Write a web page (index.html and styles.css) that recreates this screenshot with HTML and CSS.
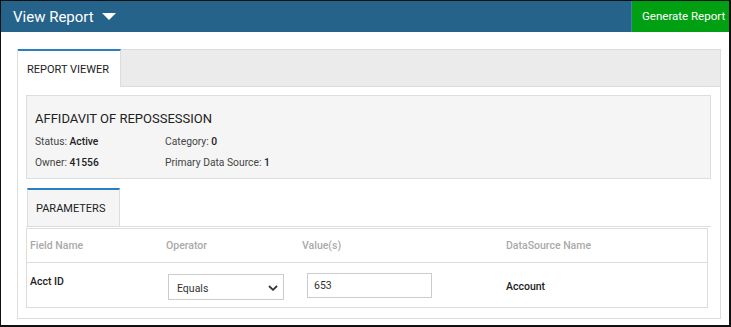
FILE: index.html
```html
<!DOCTYPE html>
<html lang="en">
<head>
    <meta charset="UTF-8">
    <meta name="viewport" content="width=device-width, initial-scale=1.0">
    <title>View Report</title>
    <link rel="stylesheet" href="styles.css">
</head>
<body>
    <div class="page">
        <header class="topbar">
            <div class="title">
                View Report
                <svg class="caret" width="14" height="8" viewBox="0 0 14 8"><path d="M0 0 L14 0 L7 7 Z" fill="#fff"/></svg>
            </div>
            <button class="generate">Generate Report</button>
        </header>

        <div class="panel">
            <div class="tabbar">
                <div class="tab active">REPORT VIEWER</div>
            </div>

            <div class="panel-body">
                <div class="info">
                    <h2>AFFIDAVIT OF REPOSSESSION</h2>
                    <div class="info-grid">
                        <div>Status: <b>Active</b></div>
                        <div>Category: <b>0</b></div>
                        <div>Owner: <b>41556</b></div>
                        <div>Primary Data Source: <b>1</b></div>
                    </div>
                </div>

                <div class="subtabs">
                    <div class="subtab">PARAMETERS</div>
                </div>

                <div class="params">
                    <div class="row head">
                        <div>Field Name</div>
                        <div>Operator</div>
                        <div>Value(s)</div>
                        <div>DataSource Name</div>
                    </div>
                    <div class="row">
                        <div class="field">Acct ID</div>
                        <div>
                            <div class="select">
                                Equals
                                <svg width="10" height="6" viewBox="0 0 10 6"><path d="M1 1 L5 4.8 L9 1" fill="none" stroke="#333" stroke-width="1.8"/></svg>
                            </div>
                        </div>
                        <div><input class="value" type="text" value="653"></div>
                        <div class="source">Account</div>
                    </div>
                </div>
            </div>
        </div>
    </div>
</body>
</html>
```

FILE: styles.css
```css
body {
    margin: 0;
    font-family: Roboto, "Liberation Sans", Arial, sans-serif;
    color: #222;
    background-color: #fff;
}

.page {
    height: 327px;
    box-sizing: border-box;
    border-style: solid;
    border-color: #111;
    border-width: 1px 2px 2px 1px;
}

.topbar {
    display: flex;
    height: 31px;
    background-color: #25638a;
}

.title {
    display: flex;
    align-items: center;
    gap: 8px;
    padding-left: 12px;
    color: #fff;
    font-size: 15px;
}

.caret {
    margin-top: 1px;
}

.generate {
    margin-left: auto;
    width: 98px;
    border: none;
    border-left: 1px solid #3a86a8;
    background-color: #00a012;
    color: #fff;
    font-family: inherit;
    font-size: 11.5px;
    padding: 0 0 2px 10px;
    text-align: left;
}

.panel {
    margin: 17px 8px 0 16px;
    border: 1px solid #ddd;
    border-top: none;
}

.tabbar {
    display: flex;
    height: 36px;
    background-color: #ebebeb;
    border-top: 1px solid #ddd;
    border-bottom: 1px solid #ddd;
}

.tab {
    display: flex;
    align-items: center;
    width: 93px;
    padding-left: 9px;
    margin-top: -1px;
    margin-bottom: -1px;
    background-color: #fff;
    border-top: 2px solid #2a7fc0;
    border-right: 1px solid #ddd;
    font-size: 11px;
    color: #222;
}

.panel-body {
    padding: 8px 9px 10px 8px;
}

.info {
    height: 82px;
    padding: 0 8px;
    background-color: #f5f5f5;
    border: 1px solid #ddd;
}

.info h2 {
    margin: 15px 0 9px;
    font-size: 13px;
    font-weight: 400;
    color: #222;
}

.info-grid {
    display: grid;
    grid-template-columns: 130px auto;
    row-gap: 8px;
    font-size: 10.3px;
    color: #444;
}

.info-grid b {
    font-weight: 500;
    color: #222;
}

.subtabs {
    display: flex;
    margin-top: 9px;
    padding-left: 1px;
    border-bottom: 1px solid #ddd;
}

.subtab {
    display: flex;
    align-items: center;
    height: 36px;
    width: 83px;
    padding-left: 8px;
    margin-bottom: -1px;
    background-color: #f5f5f5;
    border: 1px solid #ddd;
    border-top: 2px solid #2a7fc0;
    font-size: 11px;
    color: #222;
}

.params {
    margin: 1px 3px 0 0;
    border: 1px solid #ddd;
}

.row {
    display: grid;
    grid-template-columns: 20% 20% 30% 30%;
}

.row.head {
    height: 33px;
    align-items: center;
    border-bottom: 1px solid #ddd;
    font-size: 10.5px;
    font-weight: 500;
    color: #aaa;
}

.row > div {
    padding-left: 3px;
}

.row:not(.head) {
    height: 44px;
    font-size: 10.5px;
}

.field {
    padding-top: 12px;
    font-weight: 500;
    color: #222;
}

.select {
    display: flex;
    align-items: center;
    justify-content: space-between;
    box-sizing: border-box;
    width: 116px;
    height: 26px;
    margin: 11px 0 0 2px;
    padding: 2px 5px 0 8px;
    border: 1px solid #ccc;
    background-color: #fff;
    font-size: 10.5px;
    color: #333;
}

.value {
    display: block;
    box-sizing: border-box;
    width: 125px;
    height: 25px;
    margin: 10px 0 0 5px;
    padding: 0 6px;
    border: 1px solid #ccc;
    font-family: inherit;
    font-size: 10.5px;
    color: #333;
}

.source {
    padding-top: 17px;
    font-weight: 500;
    color: #222;
}
```
